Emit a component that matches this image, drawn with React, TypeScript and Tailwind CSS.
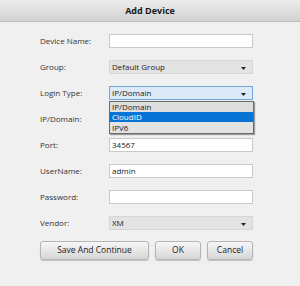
import React from 'react';

type Field = {
	label: string;
	kind: 'input' | 'select';
	value?: string;
	open?: boolean;
};

const fields: Field[] = [
	{ label: 'Device Name:', kind: 'input' },
	{ label: 'Group:', kind: 'select', value: 'Default Group' },
	{ label: 'Login Type:', kind: 'select', value: 'IP/Domain', open: true },
	{ label: 'IP/Domain:', kind: 'input' },
	{ label: 'Port:', kind: 'input', value: '34567' },
	{ label: 'UserName:', kind: 'input', value: 'admin' },
	{ label: 'Password:', kind: 'input' },
	{ label: 'Vendor:', kind: 'select', value: 'XM' },
];

function Arrow() {
	return (
		<svg width="5" height="3" viewBox="0 0 5 3" className="absolute right-[6px] top-[6px]">
			<path d="M0 0 H5 L2.5 3 Z" fill="#222" />
		</svg>
	);
}

function Control({ field }: { field: Field }) {
	if (field.kind === 'input') {
		return (
			<div className="h-[14px] w-[144px] bg-white border border-[#c9c9c9] flex items-center px-[2px] text-[8px] text-[#222]">
				{field.value}
			</div>
		);
	}
	return (
		<div className="relative w-[144px]">
			<div
				className={
					field.open
						? 'relative h-[14px] w-full border border-[#6fa7de] bg-[#dceafa] flex items-center px-[2px] text-[8px] text-[#222]'
						: 'relative h-[14px] w-full border border-[#d6d6d6] bg-[#e3e3e3] flex items-center px-[2px] text-[8px] text-[#222]'
				}
			>
				{field.value}
				<Arrow />
			</div>
			{field.open && (
				<div className="absolute left-0 top-[15px] z-10 w-[145px] border border-[#6a6a6a] bg-[#e3e3e3] shadow-[1px_1px_1px_rgba(0,0,0,0.35)] text-[8px] leading-[10px]">
					<div className="h-[10px] px-[2px] bg-[#dedede] text-[#222]">IP/Domain</div>
					<div className="h-[10px] px-[2px] bg-[#0a74d6] text-white">CloudID</div>
					<div className="h-[11px] px-[2px] pt-[1px] bg-[#e3e3e3] text-[#222]">IPV6</div>
				</div>
			)}
		</div>
	);
}

function Button({ label, width }: { label: string; width: string }) {
	return (
		<div
			className={`${width} h-[19px] rounded-[3px] border border-[#b5b5b5] bg-gradient-to-b from-[#f7f7f7] to-[#d6d6d6] shadow-[0_1px_1px_rgba(0,0,0,0.2)] flex items-center justify-center text-[8.5px] text-[#222]`}
		>
			{label}
		</div>
	);
}

export default function App() {
	return (
		<div
			className="w-[300px] h-[286px] bg-[#f0f0f0] flex flex-col overflow-hidden"
			style={{ fontFamily: '"Open Sans", "Noto Sans", sans-serif' }}
		>
			<div className="h-[22px] shrink-0 bg-gradient-to-b from-[#ececec] to-[#d2d2d2] border-b border-[#bdbdbd] flex items-center justify-center">
				<span className="text-[9px] font-bold text-[#1a1a1a]">Add Device</span>
			</div>
			<div className="flex flex-col gap-[12px] pl-[40px] pt-[12px]">
				{fields.map((f) => (
					<div key={f.label} className="flex items-center h-[14px]">
						<div className="w-[69px] text-[8px] text-[#333]">{f.label}</div>
						<Control field={f} />
					</div>
				))}
			</div>
			<div className="flex gap-[6px] pl-[40px] pt-[11px]">
				<Button label="Save And Continue" width="w-[109px]" />
				<Button label="OK" width="w-[46px]" />
				<Button label="Cancel" width="w-[46px]" />
			</div>
		</div>
	);
}
